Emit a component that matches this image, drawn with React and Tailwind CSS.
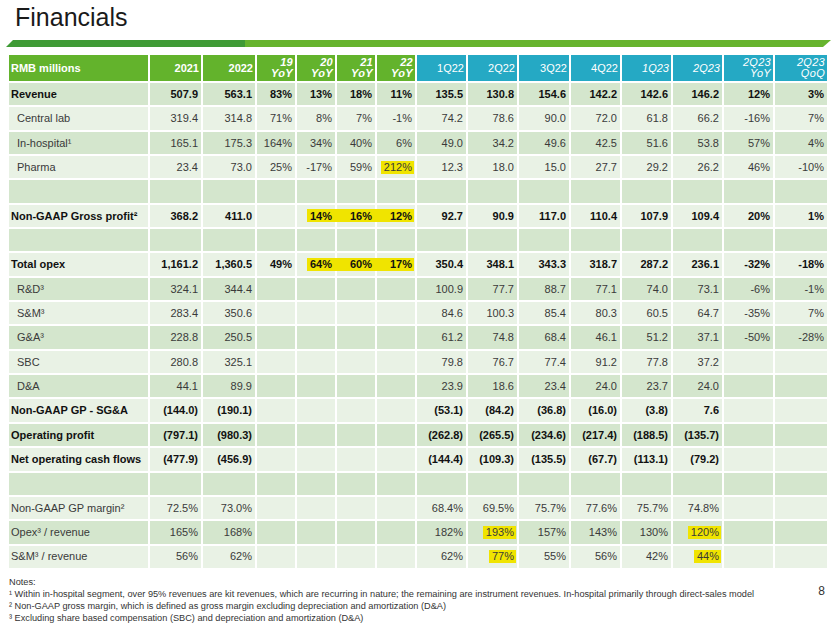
import React from "react";

const H = (t, full) => ({ t, hl: true, full });

const rows = [
  { label: "Revenue", bold: true, v: ["507.9", "563.1", "83%", "13%", "18%", "11%", "135.5", "130.8", "154.6", "142.2", "142.6", "146.2", "12%", "3%"] },
  { label: "Central lab", indent: true, v: ["319.4", "314.8", "71%", "8%", "7%", "-1%", "74.2", "78.6", "90.0", "72.0", "61.8", "66.2", "-16%", "7%"] },
  { label: "In-hospital¹", indent: true, v: ["165.1", "175.3", "164%", "34%", "40%", "6%", "49.0", "34.2", "49.6", "42.5", "51.6", "53.8", "57%", "4%"] },
  { label: "Pharma", indent: true, v: ["23.4", "73.0", "25%", "-17%", "59%", H("212%"), "12.3", "18.0", "15.0", "27.7", "29.2", "26.2", "46%", "-10%"] },
  { label: "", v: [] },
  { label: "Non-GAAP Gross profit²", bold: true, v: ["368.2", "411.0", "", H("14%"), H("16%", true), H("12%", true), "92.7", "90.9", "117.0", "110.4", "107.9", "109.4", "20%", "1%"] },
  { label: "", v: [] },
  { label: "Total opex", bold: true, v: ["1,161.2", "1,360.5", "49%", H("64%"), H("60%", true), H("17%", true), "350.4", "348.1", "343.3", "318.7", "287.2", "236.1", "-32%", "-18%"] },
  { label: "R&D³", indent: true, v: ["324.1", "344.4", "", "", "", "", "100.9", "77.7", "88.7", "77.1", "74.0", "73.1", "-6%", "-1%"] },
  { label: "S&M³", indent: true, v: ["283.4", "350.6", "", "", "", "", "84.6", "100.3", "85.4", "80.3", "60.5", "64.7", "-35%", "7%"] },
  { label: "G&A³", indent: true, v: ["228.8", "250.5", "", "", "", "", "61.2", "74.8", "68.4", "46.1", "51.2", "37.1", "-50%", "-28%"] },
  { label: "SBC", indent: true, v: ["280.8", "325.1", "", "", "", "", "79.8", "76.7", "77.4", "91.2", "77.8", "37.2", "", ""] },
  { label: "D&A", indent: true, v: ["44.1", "89.9", "", "", "", "", "23.9", "18.6", "23.4", "24.0", "23.7", "24.0", "", ""] },
  { label: "Non-GAAP GP - SG&A", bold: true, v: ["(144.0)", "(190.1)", "", "", "", "", "(53.1)", "(84.2)", "(36.8)", "(16.0)", "(3.8)", "7.6", "", ""] },
  { label: "Operating profit", bold: true, v: ["(797.1)", "(980.3)", "", "", "", "", "(262.8)", "(265.5)", "(234.6)", "(217.4)", "(188.5)", "(135.7)", "", ""] },
  { label: "Net operating cash flows", bold: true, v: ["(477.9)", "(456.9)", "", "", "", "", "(144.4)", "(109.3)", "(135.5)", "(67.7)", "(113.1)", "(79.2)", "", ""] },
  { label: "", v: [] },
  { label: "Non-GAAP GP margin²", v: ["72.5%", "73.0%", "", "", "", "", "68.4%", "69.5%", "75.7%", "77.6%", "75.7%", "74.8%", "", ""] },
  { label: "Opex³ / revenue", v: ["165%", "168%", "", "", "", "", "182%", H("193%"), "157%", "143%", "130%", H("120%"), "", ""] },
  { label: "S&M³ / revenue", v: ["56%", "62%", "", "", "", "", "62%", H("77%"), "55%", "56%", "42%", H("44%"), "", ""] },
];

const gridCols =
  "grid grid-cols-[139px_51px_52px_38px_38px_38px_38px_49px_49px_50px_49px_49px_49px_49px_52px] gap-[2px]";

function HeadCell({ children, green, className = "" }) {
  return (
    <div
      className={`flex h-[26px] items-center justify-end pr-[2px] text-[11px] leading-[11px] text-white ${
        green ? "bg-[#63b32c]" : "bg-[#25a9c4]"
      } ${className}`}
    >
      {children}
    </div>
  );
}

function TwoLine({ a, b, bold }) {
  return (
    <div className={`flex flex-col items-end italic ${bold ? "font-bold" : ""} leading-[11px] tracking-[0.3px]`}>
      <span>{a}</span>
      <span>{b}</span>
    </div>
  );
}

export default function App() {
  return (
    <div
      className="relative h-[626px] w-[840px] overflow-hidden bg-white"
      style={{ fontFamily: '"Liberation Sans", Arial, sans-serif' }}
    >
      <div className="pl-[15px] pt-[2px] text-[25px] leading-[30px] text-[#1a1a1a]">Financials</div>

      <svg className="mt-[8px] block" width="840" height="7" viewBox="0 0 840 7">
        <polygon points="13,0 246,0 246,7 6,7" fill="#3f9b36" />
        <polygon points="245,0 831,0 823,7 245,7" fill="#66b42e" />
      </svg>

      <div className={`${gridCols} ml-[9px] mt-[8px] w-[818px] bg-white`}>
        <HeadCell green className="justify-start pl-[2px] font-bold">RMB millions</HeadCell>
        <HeadCell green className="font-bold">2021</HeadCell>
        <HeadCell green className="font-bold">2022</HeadCell>
        <HeadCell green><TwoLine a="19" b="YoY" bold /></HeadCell>
        <HeadCell green><TwoLine a="20" b="YoY" bold /></HeadCell>
        <HeadCell green><TwoLine a="21" b="YoY" bold /></HeadCell>
        <HeadCell green><TwoLine a="22" b="YoY" bold /></HeadCell>
        <HeadCell>1Q22</HeadCell>
        <HeadCell>2Q22</HeadCell>
        <HeadCell>3Q22</HeadCell>
        <HeadCell>4Q22</HeadCell>
        <HeadCell className="italic">1Q23</HeadCell>
        <HeadCell className="italic">2Q23</HeadCell>
        <HeadCell><TwoLine a="2Q23" b="YoY" /></HeadCell>
        <HeadCell><TwoLine a="2Q23" b="QoQ" /></HeadCell>

        {rows.map((r, i) => {
          const bg = i % 2 === 0 ? "bg-[#d4e6cd]" : "bg-[#e9f2e5]";
          const txt = r.bold ? "font-bold text-[#111]" : "text-[#3a3a3a]";
          const cells = [];
          for (let c = 0; c < 14; c++) {
            const val = r.v[c];
            const isObj = val && typeof val === "object";
            cells.push(
              <div
                key={c}
                className={`flex h-[22.35px] items-center justify-end pr-[3px] text-[11px] ${bg} ${txt}`}
              >
                {isObj ? (
                  val.full ? (
                    <span className="ml-[-3px] mr-[-2px] flex h-[13px] flex-1 items-center justify-end bg-[#f0e400] pr-[2px]">
                      {val.t}
                    </span>
                  ) : (
                    <span className="mr-[-2px] flex h-[13px] items-center bg-[#f0e400] pl-[3px] pr-[2px]">{val.t}</span>
                  )
                ) : (
                  val || ""
                )}
              </div>
            );
          }
          return (
            <React.Fragment key={i}>
              <div
                className={`flex h-[22.35px] items-center text-[11px] ${bg} ${txt} ${
                  r.indent ? "pl-[8px]" : "pl-[2px]"
                }`}
              >
                {r.label}
              </div>
              {cells}
            </React.Fragment>
          );
        })}
      </div>

      <div className="relative mt-[8px] pl-[9px] text-[9.2px] leading-[12px] text-[#333]">
        <div>Notes:</div>
        <div>¹ Within in-hospital segment, over 95% revenues are kit revenues, which are recurring in nature; the remaining are instrument revenues. In-hospital primarily through direct-sales model</div>
        <div>² Non-GAAP gross margin, which is defined as gross margin excluding depreciation and amortization (D&amp;A)</div>
        <div>³ Excluding share based compensation (SBC) and depreciation and amortization (D&amp;A)</div>
        <div className="absolute right-[15px] top-[9px] text-[12px] text-[#333]">8</div>
      </div>
    </div>
  );
}
